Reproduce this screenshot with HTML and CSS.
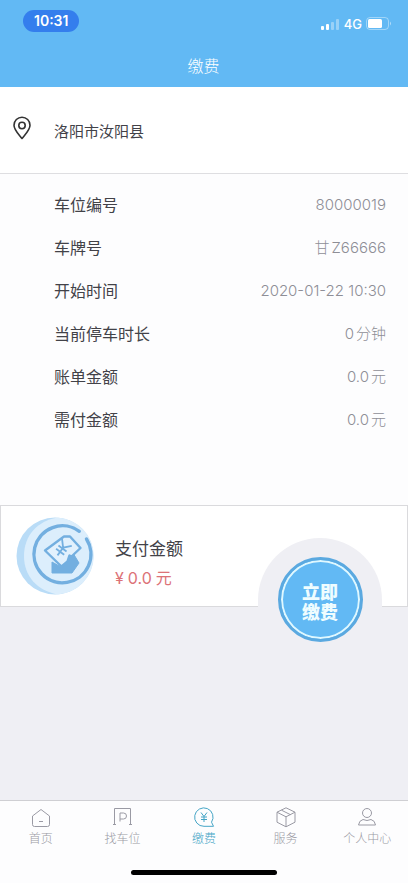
FILE: index.html
```html
<!DOCTYPE html>
<html lang="zh-CN">
<head>
<meta charset="utf-8">
<meta name="viewport" content="width=device-width, initial-scale=1">
<title>缴费</title>
<link rel="stylesheet" href="styles.css">
</head>
<body>
<header class="header">
  <div class="status">
    <time class="clock">10:31</time>
    <div class="signals">
      <svg width="20" height="12" viewBox="0 0 20 12" fill="#fff" aria-hidden="true"><rect x="1" y="8" width="3" height="4" rx="1"/><rect x="6" y="6" width="3" height="6" rx="1"/><g opacity=".35"><rect x="11" y="4" width="3" height="8" rx="1"/><rect x="16" y="1" width="3" height="11" rx="1"/></g></svg>
      <span class="network">4G</span>
      <svg width="26" height="13" viewBox="0 0 26 13" aria-hidden="true"><rect x=".5" y=".5" width="22" height="12" rx="3.5" fill="none" stroke="#fff" opacity=".4"/><rect x="2" y="2" width="14" height="9" rx="1.5" fill="#fff"/><path d="M24 4.5q2 2 0 4z" fill="#fff" opacity=".5"/></svg>
    </div>
  </div>
  <h1 class="title">缴费</h1>
</header>
<main class="main">
  <section class="location">
    <svg class="pin" width="20" height="24" viewBox="0 0 20 24" fill="none" stroke="#333" stroke-width="1.6" aria-hidden="true"><path d="M10 22.5C7 18.5 2 14 2 9.2a8 8 0 0 1 16 0C18 14 13 18.5 10 22.5Z" stroke-linejoin="round"/><circle cx="10" cy="9.5" r="3.2"/></svg>
    <span>洛阳市汝阳县</span>
  </section>
  <dl class="details">
    <div class="row"><dt>车位编号</dt><dd>80000019</dd></div>
    <div class="row"><dt>车牌号</dt><dd><span>甘</span><span>Z66666</span></dd></div>
    <div class="row"><dt>开始时间</dt><dd>2020-01-22 10:30</dd></div>
    <div class="row"><dt>当前停车时长</dt><dd><span>0</span><span>分钟</span></dd></div>
    <div class="row"><dt>账单金额</dt><dd><span>0.0</span><span>元</span></dd></div>
    <div class="row"><dt>需付金额</dt><dd><span>0.0</span><span>元</span></dd></div>
  </dl>
  <section class="payment">
    <svg class="coin" width="78" height="78" viewBox="0 0 78 78" aria-hidden="true">
      <circle cx="39" cy="39" r="38.5" fill="#b9dcf7"/>
      <path d="M42 .6a38.5 38.5 0 0 1 0 76.8C21 74 8 59 8 39S21 4 42 .6Z" fill="#dceefc"/>
      <path d="M63.3 14.3A28.5 28.5 0 1 0 70.5 22" fill="none" stroke="#73afe0" stroke-width="3.4" stroke-linecap="round"/>
      <path d="M36 45v11h20l7-10-6-10-12 14Z" fill="#73afe0" stroke="#73afe0" stroke-linejoin="round"/>
      <path d="M48 19.5h6L64.500 31l-9 8.500-2-1-2 6-6 5L29 33.500Z" fill="#e2f1fd" stroke="#73afe0" stroke-width="2.4" stroke-linejoin="round"/>
      <g transform="translate(46.500 31.500) rotate(36)" fill="none" stroke="#73afe0" stroke-width="1.800"><path d="M-6-7.500 0-1 6-7.500M0-1V8.500M-5 0H5M-5 4H5"/></g>
    </svg>
    <div class="amount">
      <span class="amount-label">支付金额</span>
      <span class="price"><span>¥</span><span>0.0</span><span>元</span></span>
    </div>
    <div class="pay-wrap"><button class="pay" type="button"><span>立即</span><span>缴费</span></button></div>
  </section>
</main>
<nav class="tabs" aria-label="主导航">
  <a class="tab" href="#home"><svg width="24" height="22" viewBox="0 0 24 22" aria-hidden="true"><path d="M3.5 9 12 2.5 20.5 9v8.5q0 2-2 2h-13q-2 0-2-2ZM10 14.5h4"/></svg><span>首页</span></a>
  <a class="tab" href="#parking"><svg width="24" height="22" viewBox="0 0 24 22" aria-hidden="true"><path d="M4.5 17.500V1.500h16v16M3 17.500h3M19 17.500h3M10 14.500V6h3.500a3 3 0 0 1 0 6H10"/></svg><span>找车位</span></a>
  <a class="tab active" href="#pay" aria-current="page"><svg width="24" height="22" viewBox="0 0 24 22" aria-hidden="true"><path d="M19.500 15.200A9.200 9.200 0 1 0 12 19.300h9.500ZM9 5.500l3 4 3-4M12 9.500v5.500M9 10h6M9 12.500h6"/></svg><span>缴费</span></a>
  <a class="tab" href="#service"><svg width="24" height="22" viewBox="0 0 24 22" aria-hidden="true"><path d="m12 .8 9 4.400v10L12 19.800l-9-4.600v-10ZM3 5.200l9 4.600 9-4.600M12 9.800v10M7.500 3.200l9 4.500"/></svg><span>服务</span></a>
  <a class="tab" href="#profile"><svg width="24" height="22" viewBox="0 0 24 22" aria-hidden="true"><circle cx="12" cy="6" r="4.500"/><path d="M8 12.500q4 2 8 0 4 1 4.500 5.500h-17Q4 13.500 8 12.500Z"/></svg><span>个人中心</span></a>
</nav>
<div class="home-bar"></div>
</body>
</html>
```
FILE: styles.css
```css
* { box-sizing: border-box; }

body {
  margin: 0;
  min-height: 100vh;
  display: flex;
  flex-direction: column;
  background: #efeff4;
  color: #424248;
  font: 16px/24px Inter, "Noto Sans CJK SC", sans-serif;
}

.header { padding: 10px 16px 9px 23px; background: #62b9f4; color: #fff; }
.status { display: flex; justify-content: space-between; align-items: center; height: 22px; }
.clock { padding: 0 11px; border-radius: 11px; background: #347eed; font-size: 14px; line-height: 22px; font-weight: 600; }
.signals { display: flex; align-items: center; gap: 4px; padding-top: 5px; }
.network { font-size: 13px; line-height: 16px; font-weight: 500; }
.title { margin: 22px 0 0; padding-right: 8px; text-align: center; font-size: 16px; line-height: 24px; font-weight: 300; }

.main { flex: 1; }
.location { display: flex; align-items: center; gap: 22px; height: 87px; padding: 0 12px; border-bottom: 1px solid #dedee1; background: #fff; font-size: 15px; }
.location span { padding-top: 4px; }
.pin { margin-bottom: 4px; }

.details { margin: 0; padding: 9px 22px 64px 54px; background: #fdfdfe; }
.row { display: flex; justify-content: space-between; align-items: center; height: 43px; }
.row dd { display: flex; gap: 2px; margin: 0; color: #8e8e96; font-size: 15px; font-weight: 300; }

.payment { position: relative; display: flex; align-items: center; gap: 21px; height: 102px; padding-left: 15px; border: 1px solid #dadadd; background: #fff; }
.amount { display: flex; flex-direction: column; gap: 5px; padding-top: 14px; }
.amount-label { font-size: 17px; }
.price { display: flex; gap: 4px; color: #dc7277; }
.pay-wrap { position: absolute; right: 25px; top: 32px; width: 124px; padding: 19px 0 20px; border-radius: 62px 62px 0 0; background: #efeff4; display: flex; justify-content: center; }
.pay { flex: none; display: flex; flex-direction: column; align-items: center; justify-content: center; width: 85px; height: 85px; padding: 3px 0 0; border: 3px solid #5ba9e0; border-radius: 50%; background: #62b9f4; box-shadow: inset 0 0 0 2px #dff8ff; color: #effdff; font: 900 18px/20px "Noto Sans CJK SC", sans-serif; }

.tabs { display: grid; grid-template-columns: repeat(5, 1fr); border-top: 1px solid #cfcfd3; background: #fdfdfe; padding-top: 6px; height: 66px; }
.tab { display: flex; flex-direction: column; align-items: center; color: #9a9aa4; font-size: 12px; line-height: 20px; font-weight: 300; text-decoration: none; }
.tab svg { fill: none; stroke: currentColor; stroke-width: 1; stroke-linejoin: round; }
.tab.active { color: #45a5c6; }
.home-bar { padding: 4px 0 8px; background: #fdfdfe; }
.home-bar::before { content: ""; display: block; width: 36%; height: 5px; margin: auto; border-radius: 3px; background: #000; }
```
